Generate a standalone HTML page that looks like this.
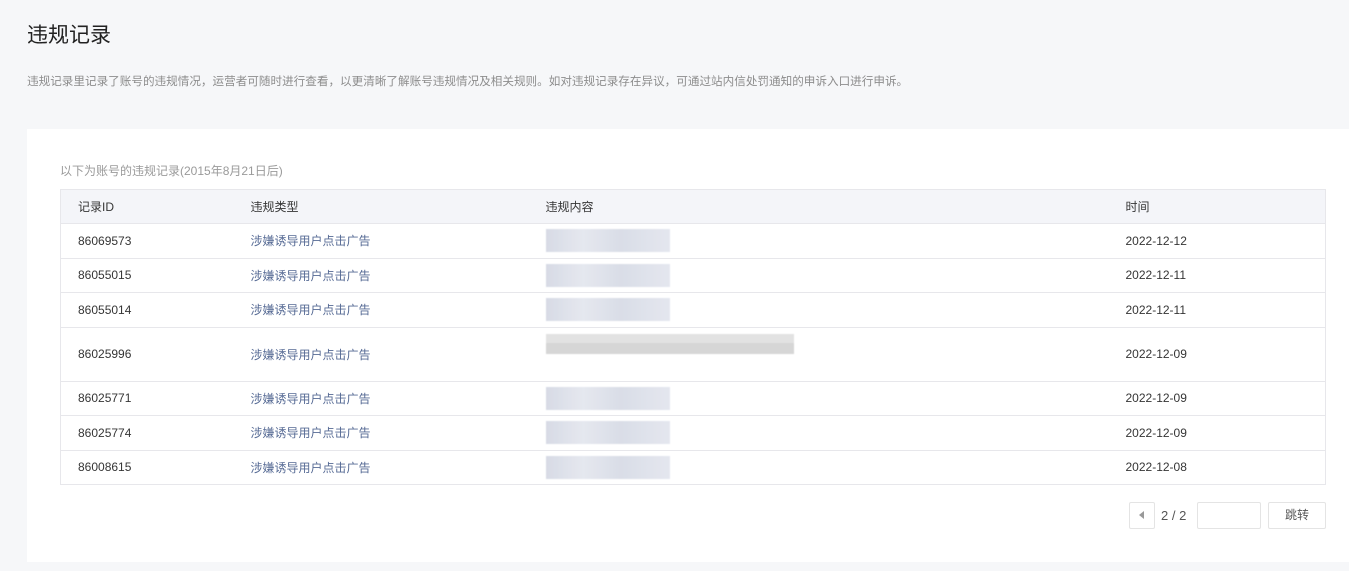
<!DOCTYPE html>
<html><head><meta charset="utf-8"><style>
*{margin:0;padding:0;box-sizing:border-box}
body{width:1349px;height:571px;background:#f6f7f9;font-family:"Liberation Sans","Noto Sans CJK SC",sans-serif;position:relative;overflow:hidden;color:#353535}
h1{position:absolute;left:27px;top:19px;font-size:21px;font-weight:normal;color:#222}
.desc{position:absolute;left:27px;top:73px;font-size:11.6px;color:#8d8d8d;white-space:nowrap}
.card{position:absolute;left:27px;top:129px;width:1322px;height:433px;background:#fff}
.sub{position:absolute;left:33px;top:33px;font-size:12px;color:#9a9a9a}
table{position:absolute;left:33px;top:60px;width:1266px;border-collapse:collapse;border:1px solid #e7e7eb;font-size:12px;table-layout:fixed}
th{background:#f4f5f9;height:34px;text-align:left;font-weight:normal;color:#353535;border-bottom:1px solid #e7e7eb}
td{height:34.5px;border-bottom:1px solid #e7e7eb;color:#353535}
td.t{color:#576b95}
.p1{padding-left:17px}
.blur{width:124px;height:23px;background:linear-gradient(90deg,#d3d7e3,#e3e6ee 30%,#d6dae5 60%,#e2e5ee);opacity:.9;filter:blur(.6px)}
.blur2{width:248px;height:40px;background:linear-gradient(180deg,#e2e2e2 0 9px,#d6d6d6 9px 20px,#fff 20px),linear-gradient(#dcdcdc,#eee);background-size:100% 100%,22px 22px;background-repeat:no-repeat;background-position:0 0,0 20px;filter:blur(.6px)}
.pg{position:absolute;top:373px;height:27px;border:1px solid #e4e4e4;border-radius:2px;background:#fff;font-size:12px}
</style></head><body>
<h1>违规记录</h1>
<div class="desc">违规记录里记录了账号的违规情况，运营者可随时进行查看，以更清晰了解账号违规情况及相关规则。如对违规记录存在异议，可通过站内信处罚通知的申诉入口进行申诉。</div>
<div class="card">
<div class="sub">以下为账号的违规记录(2015年8月21日后)</div>
<table>
<colgroup><col style="width:190px"><col style="width:295px"><col style="width:580px"><col></colgroup>
<tr><th class="p1">记录ID</th><th>违规类型</th><th>违规内容</th><th>时间</th></tr>
<tr><td class="p1">86069573</td><td class="t">涉嫌诱导用户点击广告</td><td><div class="blur"></div></td><td>2022-12-12</td></tr>
<tr><td class="p1">86055015</td><td class="t">涉嫌诱导用户点击广告</td><td><div class="blur"></div></td><td>2022-12-11</td></tr>
<tr><td class="p1">86055014</td><td class="t">涉嫌诱导用户点击广告</td><td><div class="blur"></div></td><td>2022-12-11</td></tr>
<tr><td class="p1" style="height:54px">86025996</td><td class="t">涉嫌诱导用户点击广告</td><td><div class="blur2"></div></td><td>2022-12-09</td></tr>
<tr><td class="p1">86025771</td><td class="t">涉嫌诱导用户点击广告</td><td><div class="blur"></div></td><td>2022-12-09</td></tr>
<tr><td class="p1">86025774</td><td class="t">涉嫌诱导用户点击广告</td><td><div class="blur"></div></td><td>2022-12-09</td></tr>
<tr><td class="p1">86008615</td><td class="t">涉嫌诱导用户点击广告</td><td><div class="blur"></div></td><td>2022-12-08</td></tr>
</table>
<div class="pg" style="left:1102px;width:26px"><div style="position:absolute;left:9px;top:8px;width:0;height:0;border-top:4px solid transparent;border-bottom:4px solid transparent;border-right:5px solid #999"></div></div>
<div style="position:absolute;left:1134px;top:379px;font-size:13px;color:#555">2 / 2</div>
<div class="pg" style="left:1170px;width:64px"></div>
<div class="pg" style="left:1241px;width:58px;text-align:center;line-height:25px;color:#555">跳转</div>
</div>
</body></html>
